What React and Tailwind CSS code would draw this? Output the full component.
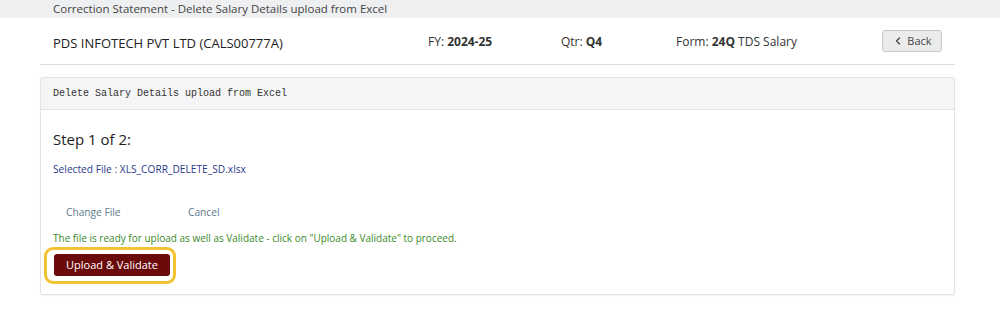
import { ChevronLeft } from "lucide-react";

const sans = { fontFamily: '"Open Sans", "Noto Sans", sans-serif' };

export default function App() {
  return (
    <div className="w-[1000px] h-[333px] bg-white text-[#333]" style={sans}>
      <div className="h-[18px] bg-[#eeeff1] pl-[53px] text-[11.5px] leading-[18px] text-[#444]">
        Correction Statement - Delete Salary Details upload from Excel
      </div>

      <div className="ml-[40px] flex h-[47px] w-[915px] items-center border-b border-[#dcdcdc] pl-[13px] pr-[13px]">
        <div className="w-[375px] pt-[5px] text-[13px] text-[#222]">PDS INFOTECH PVT LTD (CALS00777A)</div>
        <div className="w-[133px] pt-[2px] text-[12px] text-[#333]">
          FY: <span className="font-bold">2024-25</span>
        </div>
        <div className="w-[115px] pt-[2px] text-[12px] text-[#333]">
          Qtr: <span className="font-bold">Q4</span>
        </div>
        <div className="flex-1 pt-[2px] text-[12px] text-[#333]">
          Form: <span className="font-bold">24Q</span> TDS Salary
        </div>
        <button className="flex h-[22px] w-[60px] items-center justify-center gap-[3px] rounded-[3px] border border-[#c8c8c8] bg-[#ebebeb] text-[11px] text-[#444]">
          <ChevronLeft size={12} strokeWidth={2.5} />
          Back
        </button>
      </div>

      <div className="ml-[40px] mt-[12px] h-[218px] w-[915px] rounded-[2px] border border-[#e3e3e3] shadow-[0_1px_1px_rgba(0,0,0,0.05)]">
        <div
          className="flex h-[32px] items-center border-b border-[#e3e3e3] bg-[#f5f5f5] pl-[12px] text-[10px] text-[#333]"
          style={{ fontFamily: '"Liberation Mono", "DejaVu Sans Mono", monospace' }}
        >
          Delete Salary Details upload from Excel
        </div>
        <div className="px-[12px]">
          <div className="mt-[18px] text-[15px] text-[#222]">Step 1 of 2:</div>
          <div className="mt-[11px] text-[10.2px] text-[#2c3a8a]">Selected File : XLS_CORR_DELETE_SD.xlsx</div>
          <div className="mt-[28px] flex text-[10.2px] text-[#5b7a8c]">
            <span className="ml-[13px] w-[122px]">Change File</span>
            <span>Cancel</span>
          </div>
          <div className="mt-[11px] text-[10px] text-[#3a8a2a]">
            The file is ready for upload as well as Validate - click on "Upload &amp; Validate" to proceed.
          </div>
          <div className="mt-[1px] ml-[-9px] inline-flex rounded-[9px] border-[3px] border-[#f2c230] pl-[7px] pr-[3px] pt-[4px] pb-[5px]">
            <button className="h-[22px] w-[116px] rounded-[3px] bg-[#6a0a0a] text-[11px] text-white">
              Upload &amp; Validate
            </button>
          </div>
        </div>
      </div>
    </div>
  );
}
